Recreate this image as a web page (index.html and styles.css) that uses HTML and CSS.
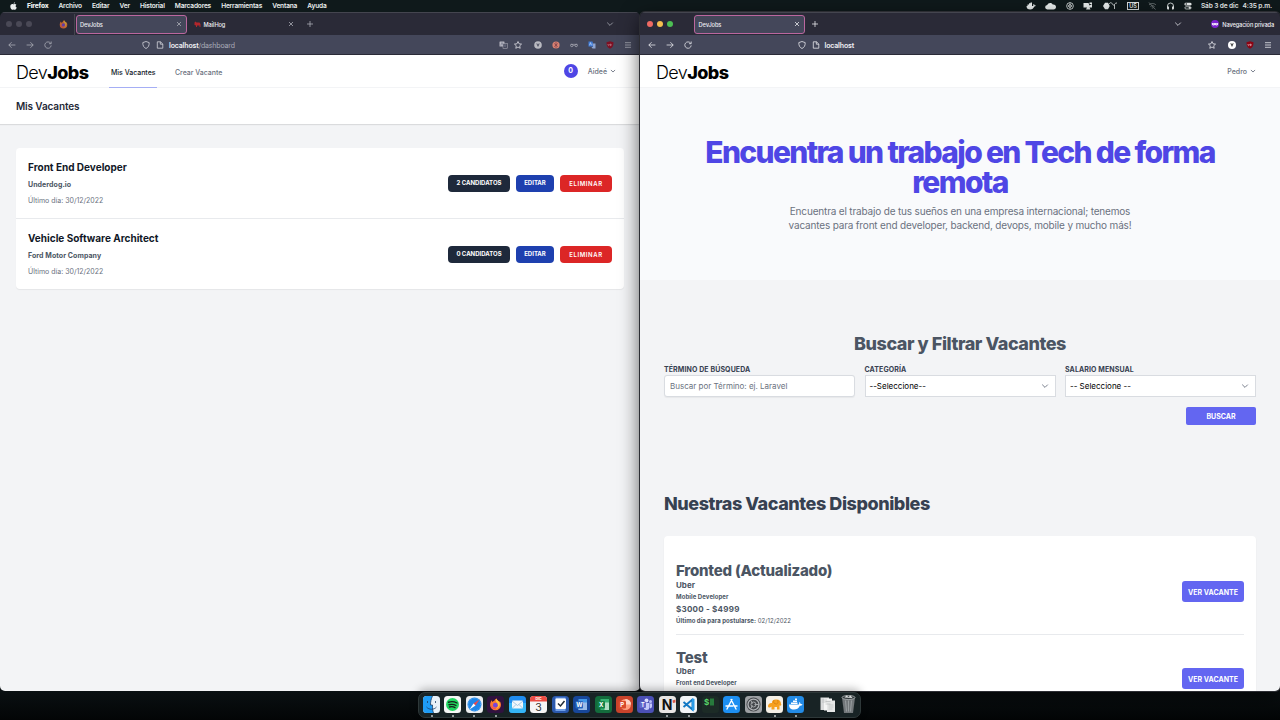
FILE: index.html
```html
<!DOCTYPE html>
<html lang="es">
<head>
<meta charset="utf-8">
<title>DevJobs</title>
<link rel="stylesheet" href="styles.css">
</head>
<body>
<svg class="sprite" aria-hidden="true">
  <symbol id="back" viewBox="0 0 8 8"><path d="M7.4 4H.8M3.6 1.2.8 4l2.8 2.8"/></symbol>
  <symbol id="fwd" viewBox="0 0 8 8"><path d="M.6 4h6.6M4.4 1.2 7.2 4 4.4 6.8"/></symbol>
  <symbol id="reload" viewBox="0 0 8 8"><path d="M6.6 2.2A3.2 3.2 0 1 0 7.2 4.4M7.2.5v2.2H5"/></symbol>
  <symbol id="shield" viewBox="0 0 8 8"><path d="M4 .5 7.2 1.6C7.2 4.6 6.4 6.400 4 7.500 1.600 6.400.8 4.600.8 1.600Z"/></symbol>
  <symbol id="doc" viewBox="0 0 8 8"><path d="M1.300.8h3.200L6.800 3v4.200H1.300ZM4.300.8V3.200h2.400"/></symbol>
  <symbol id="star" viewBox="0 0 8 8"><path d="m4 .5 1.050 2.300 2.500.3-1.850 1.700.5 2.500L4 6.050 1.800 7.300l.5-2.500L.45 3.100l2.500-.3Z"/></symbol>
  <symbol id="menu" viewBox="0 0 8 8"><path d="M1 1.700h6M1 4h6M1 6.300h6"/></symbol>
  <symbol id="down" viewBox="0 0 8 8"><path d="m1.200 2.600 2.800 2.800 2.800-2.800"/></symbol>
  <symbol id="close" viewBox="0 0 8 8"><path d="m2 2 4 4M6 2 2 6"/></symbol>
  <symbol id="plus" viewBox="0 0 8 8"><path d="M4 1v6M1 4h6"/></symbol>
  <symbol id="fox" viewBox="0 0 20 20">
    <path fill="#ff7b2e" d="M10 19a8.300 8.300 0 0 1-8.300-8.300C1.700 7.500 3 5 4.200 3.500L5 6c1-1 2-1.300 3-1.200C8.500 3 10 1.500 11.500.8c0 2 3 3 4.300 5.200l.6-1.500c1.500 2 2 4 2 6.200A8.400 8.400 0 0 1 10 19Z"/>
    <path fill="#ffc13b" d="M11.500.8c0 2 3 3 4.600 6 1.800 5-2 9.700-6.100 9.700 5-2 5-8 1-10.500-.8-2-.7-3.800.5-5.200Z"/>
    <circle cx="9.700" cy="11" r="3.700" fill="#7a45d8"/>
    <path fill="#f4436a" d="M2 9c1 5 5 7.500 10 6-4 4-10 1-10-6Z"/>
  </symbol>
</svg>

<header class="menubar">
  <svg class="apple" viewBox="0 0 14 16"><path d="M10.200.3c.1 1.700-1.300 3.200-2.900 3.200C7.100 1.900 8.600.4 10.200.3ZM12.800 5.400c-2.300 1.300-2 4.700.7 5.800-.6 1.800-2 4.300-3.500 4.300-1 0-1.300-.6-2.600-.6s-1.700.6-2.600.6C2.800 15.500.6 11.800.6 8.900c0-4.500 4.200-5.700 5.900-4.400.6.300.9.300 1.500 0 1.700-.9 3.800-.5 4.800.9Z"/></svg>
  <nav class="menus"><b>Firefox</b><span>Archivo</span><span>Editar</span><span>Ver</span><span>Historial</span><span>Marcadores</span><span>Herramientas</span><span>Ventana</span><span>Ayuda</span></nav>
  <div class="status">
    <svg width="10" height="8" viewBox="0 0 20 16"><path fill="currentColor" d="M1 8h13c1-1 1-2 .5-3l1-1c1 .7 1.500 1.500 1.500 2.500 1 0 2 0 2.500.5-.5 1.500-1.600 2-3 2-1.500 4-4 6-8 6-5 0-7.500-2-7.500-7Z"/><path fill="currentColor" d="M3 5h9v4H3zM6 2.500h6v3H6zM9 1h3v2H9z"/></svg>
    <svg width="12" height="8" viewBox="0 0 24 16"><path fill="currentColor" d="M5 15a4.500 4.500 0 0 1-.5-9C6 2 12 0 15.500 5c4-.5 6.500 1.500 6.500 5 0 3-2 5-5 5Z"/></svg>
    <svg width="8" height="8" viewBox="0 0 16 16"><circle cx="8" cy="8" r="6.700" fill="none" stroke="currentColor" stroke-width="1.600"/><circle cx="8" cy="8" r="2.700" fill="none" stroke="currentColor" stroke-width="2"/><path d="M8 1v3M8 12v3" stroke="currentColor"/></svg>
    <svg width="10" height="8" viewBox="0 0 20 16"><path fill="currentColor" d="M1 2h10l2 5 5-3v7h-5l2 4H6l2-4H1Z"/><path fill="currentColor" d="M13 1h5v3h-5z"/></svg>
    <svg width="16" height="8" viewBox="0 0 32 16"><path fill="currentColor" d="M6 1.500h6L15.500 8 12 14.500H6L2 8Z"/><path d="M14 4c3-4 5-3 7 0 1 2 2 3 3 2 2-3 3-4 6-4M25 6v8" fill="none" stroke="currentColor" stroke-width="1.600"/></svg>
    <span class="us">US</span>
    <svg class="dim" width="9" height="8" viewBox="0 0 18 16"><path d="M2 6c4-4 10-4 14 0M5 9c2-2 6-2 8 0M7.500 12h3M2 1l13 14" fill="none" stroke="currentColor" stroke-width="1.800"/></svg>
    <svg width="9" height="8" viewBox="0 0 18 16"><path d="M3 11V8a6 6 0 0 1 12 0v3" fill="none" stroke="currentColor" stroke-width="1.700"/><path d="M2 9h4v6H4q-2 0-2-2ZM12 9h4v4q0 2-2 2h-2Z" fill="currentColor"/></svg>
    <svg width="8" height="8" viewBox="0 0 16 16"><rect x="1" y="1.500" width="14" height="5.500" rx="2.700" fill="currentColor"/><circle cx="4.500" cy="4.200" r="1.500" fill="#111b1d"/><rect x="1.800" y="9.500" width="12.400" height="4.500" rx="2.200" fill="none" stroke="currentColor" stroke-width="1.500"/><circle cx="11.500" cy="11.700" r="2.300" fill="currentColor"/></svg>
    <span class="clock"><span>Sáb 3 de dic</span><span>4:35 p.m.</span></span>
  </div>
</header>

<section class="window left">
  <div class="tabs">
    <div class="lights"><i></i><i></i><i></i></div>
    <svg class="pin" viewBox="0 0 20 20"><use href="#fox"/></svg>
    <div class="tab active"><span>DevJobs</span><svg class="ic"><use href="#close"/></svg></div>
    <div class="tab hog"><svg width="7" height="7" viewBox="0 0 14 14"><path fill="#b3262c" d="M1 3 3 1l2 2h6l2 3v6h-2V9H6v3H4V9L1 8Z"/></svg><span>MailHog</span><svg class="ic"><use href="#close"/></svg></div>
    <svg class="ic new"><use href="#plus"/></svg>
    <svg class="ic list"><use href="#down"/></svg>
  </div>
  <div class="toolbar">
    <svg class="ic"><use href="#back"/></svg><svg class="ic"><use href="#fwd"/></svg><svg class="ic"><use href="#reload"/></svg>
    <div class="url"><svg class="ic"><use href="#shield"/></svg><svg class="ic"><use href="#doc"/></svg><span><b>localhost</b>/dashboard</span></div>
    <div class="tools">
      <svg class="translate" width="9" height="8" viewBox="0 0 18 16"><rect x="1" y="1" width="10" height="10" rx="1" fill="#b5b5c0"/><rect x="8" y="5" width="9" height="10" fill="#44475a" stroke="#b5b5c0"/><path d="m3.500 9 2.500-6 2.500 6M10 8h5M12.500 7c0 3-1 4-2.500 5M11 9c1 2 2 3 4 3.500" fill="none" stroke="#73758a" stroke-width="1.300"/></svg>
      <svg class="ic star"><use href="#star"/></svg>
      <svg class="ic" viewBox="0 0 8 8"><circle cx="4" cy="4" r="3.800" fill="#b9bac1" stroke="none"/><path d="M2.300 2.500h1L4 4l.7-1.500h1L4 6Z" fill="#44475a" stroke="none"/></svg>
      <svg class="ic" viewBox="0 0 8 8"><circle cx="4" cy="4" r="3.600" fill="#d98272" stroke="none"/><path d="M4 1v6M2.200 2.500 4 4l1.800-1.500M2.200 5.700 4 4l1.800 1.700" class="bug"/></svg>
      <svg class="ic" viewBox="0 0 8 8"><circle cx="1.800" cy="4.500" r="1.200"/><circle cx="6.200" cy="4.500" r="1.200"/><path d="M3 4.300q1-.6 2 0M.5 3.300h7" stroke-width=".5"/></svg>
      <svg class="ic" viewBox="0 0 8 8"><path d="M.5.5h4l1 5h-5Z" fill="#3d7bd8" stroke="none"/><path d="M4.500 2.500h3v5h-3l-1-1.500h1.500Z" fill="#8fa5cf" stroke="none"/><path d="m1.500 4.300 1-2.700 1 2.700" stroke="#dce6f8" stroke-width=".6"/></svg>
      <svg class="ic" viewBox="0 0 8 8"><path d="M4 .3 7.500 1.300C7.500 5 6.500 6.500 4 7.700 1.500 6.500.5 5 .5 1.300Z" fill="#7d1023" stroke="none"/><path d="M2 3v1.200q.6.800 1.200 0V3M4.400 3v1.700h.6q.9-.8 0-1.600Z" stroke="#c9a0a9" stroke-width=".5"/></svg>
      <svg class="ic"><use href="#menu"/></svg>
    </div>
  </div>
  <main class="page">
    <div class="topnav">
      <div class="logo">Dev<b>Jobs</b></div>
      <a class="link current">Mis Vacantes</a><a class="link crear">Crear Vacante</a>
      <span class="badge">0</span>
      <span class="user">Aideé <svg viewBox="0 0 8 8"><use href="#down"/></svg></span>
    </div>
    <div class="heading">Mis Vacantes</div>
    <div class="list-card">
      <article class="vacancy">
        <div class="info"><h3>Front End Developer</h3><p class="company">Underdog.io</p><p class="date">Último día: 30/12/2022</p></div>
        <div class="actions"><a class="btn dark">2 CANDIDATOS</a><a class="btn blue">EDITAR</a><a class="btn red">ELIMINAR</a></div>
      </article>
      <article class="vacancy">
        <div class="info"><h3>Vehicle Software Architect</h3><p class="company">Ford Motor Company</p><p class="date">Último día: 30/12/2022</p></div>
        <div class="actions"><a class="btn dark">0 CANDIDATOS</a><a class="btn blue">EDITAR</a><a class="btn red">ELIMINAR</a></div>
      </article>
    </div>
  </main>
</section>

<section class="window right">
  <div class="tabs">
    <div class="lights on"><i></i><i></i><i></i></div>
    <div class="tab active"><span>DevJobs</span><svg class="ic"><use href="#close"/></svg></div>
    <svg class="ic new"><use href="#plus"/></svg>
    <svg class="ic list"><use href="#down"/></svg>
    <div class="private"><svg viewBox="0 0 8 8"><circle cx="4" cy="4" r="3.900" fill="#7d22cf"/><path d="M.8 3.300q1.600-.8 3.200 0 1.600-.8 3.200 0 0 2.200-1.700 2.200Q4.500 5.500 4 4.600 3.500 5.500 2.500 5.500.8 5.500.8 3.300Z" fill="#fff"/><path d="M1.900 4h1M5.100 4h1" stroke="#7d22cf" stroke-width=".7"/></svg><span>Navegación privada</span></div>
  </div>
  <div class="toolbar">
    <svg class="ic"><use href="#back"/></svg><svg class="ic"><use href="#fwd"/></svg><svg class="ic"><use href="#reload"/></svg>
    <div class="url"><svg class="ic"><use href="#shield"/></svg><svg class="ic"><use href="#doc"/></svg><span><b>localhost</b></span></div>
    <div class="tools">
      <svg class="ic star"><use href="#star"/></svg>
      <svg class="ic" viewBox="0 0 8 8"><circle cx="4" cy="4" r="4" fill="#fff" stroke="none"/><path d="M2.300 2.300h1L4 3.800l.7-1.500h1L4 6Z" fill="#333" stroke="none"/></svg>
      <svg class="ic" viewBox="0 0 8 8"><path d="M4 .3 7.500 1.300C7.500 5 6.500 6.500 4 7.700 1.500 6.500.5 5 .5 1.300Z" fill="#8b0413" stroke="none"/><path d="M2 3v1.200q.6.800 1.200 0V3M4.400 3v1.700h.6q.9-.8 0-1.600Z" stroke="#eccace" stroke-width=".6"/></svg>
      <svg class="ic"><use href="#menu"/></svg>
    </div>
  </div>
  <main class="page">
    <div class="topnav">
      <div class="logo">Dev<b>Jobs</b></div>
      <span class="user">Pedro <svg viewBox="0 0 8 8"><use href="#down"/></svg></span>
    </div>
    <div class="hero">
      <h1>Encuentra un trabajo en Tech de forma<br>remota</h1>
      <p>Encuentra el trabajo de tus sueños en una empresa internacional; tenemos<br>vacantes para front end developer, backend, devops, mobile y mucho más!</p>
    </div>
    <div class="search">
      <h2>Buscar y Filtrar Vacantes</h2>
      <div class="fields">
        <div class="field"><label>TÉRMINO DE BÚSQUEDA</label><div class="control input">Buscar por Término: ej. Laravel</div></div>
        <div class="field"><label>CATEGORÍA</label><div class="control"><span>--Seleccione--</span><svg viewBox="0 0 8 8"><use href="#down"/></svg></div></div>
        <div class="field"><label>SALARIO MENSUAL</label><div class="control"><span>-- Seleccione --</span><svg viewBox="0 0 8 8"><use href="#down"/></svg></div></div>
      </div>
      <a class="submit">BUSCAR</a>
    </div>
    <h2 class="available">Nuestras Vacantes Disponibles</h2>
    <div class="jobs">
      <article class="job">
        <div><h3>Fronted (Actualizado)</h3><p class="firm">Uber</p><p class="cat">Mobile Developer</p><p class="pay">$3000 - $4999</p><p class="last"><b>Último día para postularse:</b> 02/12/2022</p></div>
        <a class="view">VER VACANTE</a>
      </article>
      <article class="job cut">
        <div><h3>Test</h3><p class="firm">Uber</p><p class="cat">Front end Developer</p></div>
        <a class="view">VER VACANTE</a>
      </article>
    </div>
  </main>
</section>

<footer class="dock">
  <div class="app run"><svg viewBox="0 0 34 34"><rect width="34" height="34" rx="7" fill="#e9f1f8"/><path d="M7 0h12c-3 6-4 12-4 18h4c0 6 0 11 2 16H7a7 7 0 0 1-7-7V7a7 7 0 0 1 7-7Z" fill="#1e9bf4"/><path d="M9 10v4M25 10v4M7 22c5 6 15 6 20 0M19 0c-3 6-4 12-4 18h4c0 6 0 11 2 16" fill="none" stroke="#17375e" stroke-width="1.500"/></svg></div>
  <div class="app run"><svg viewBox="0 0 34 34"><rect width="34" height="34" rx="7" fill="#f6f7f6"/><circle cx="17" cy="17" r="13" fill="#20d760"/><path d="M9 12.500c6-2 12-1 17 1.500M10 17.500c5-1.500 10-1 14 1.500M11 22c4-1.200 8-.7 11 1.300" fill="none" stroke="#17241b" stroke-width="2.700" stroke-linecap="round"/></svg></div>
  <div class="app run"><svg viewBox="0 0 34 34"><rect width="34" height="34" rx="7" fill="#eceef0"/><circle cx="17" cy="17" r="14" fill="#1e86e8"/><circle cx="17" cy="17" r="12.500" fill="none" stroke="#8cc8fa" stroke-dasharray="1 2" stroke-width="2"/><path d="m27 7-8 12-4-4Z" fill="#f04848"/><path d="m7 27 8-12 4 4Z" fill="#fff"/></svg></div>
  <div class="app run"><svg viewBox="0 0 34 34"><rect width="34" height="34" rx="7" fill="#30123f"/><use href="#fox" x="4" y="4" width="26" height="26"/></svg></div>
  <div class="app"><svg viewBox="0 0 34 34"><rect width="34" height="34" rx="7" fill="#1f8cf0"/><path d="M0 14h34v13a7 7 0 0 1-7 7H7a7 7 0 0 1-7-7Z" fill="#35b5f6"/><rect x="6" y="9" width="22" height="16" rx="2" fill="#f2f7fb"/><path d="m6 10 11 9 11-9M6 25l8-8M28 25l-8-8" fill="none" stroke="#8ab9dc" stroke-width="1.500"/></svg></div>
  <div class="app"><svg viewBox="0 0 34 34"><rect width="34" height="34" rx="7" fill="#f6f6f6"/><path d="M0 11V7a7 7 0 0 1 7-7h20a7 7 0 0 1 7 7v4Z" fill="#ec4c43"/><text x="17" y="8.500" class="t" font-size="7" fill="#fff">DIC</text><text x="17" y="29" class="t thin" font-size="21" fill="#333">3</text></svg></div>
  <div class="app"><svg viewBox="0 0 34 34"><rect width="34" height="34" rx="7" fill="#2b59ad"/><path d="M7 3h20v27H7Z" fill="#70a0e8"/><rect x="7" y="5" width="21" height="21" rx="2" fill="#fff"/><path d="m12 15 5 5 8-10" fill="none" stroke="#222b36" stroke-width="3"/></svg></div>
  <div class="app"><svg viewBox="0 0 34 34"><rect width="34" height="34" rx="7" fill="#17479a"/><path d="M11 6h17v22H11Z" fill="#4398e8"/><path d="M11 13h17v15H11Z" fill="#9bbce8"/><rect x="5" y="10" width="15" height="15" rx="2" fill="#2566bd"/><text x="12.500" y="22" class="t" font-size="12" fill="#fff">W</text></svg></div>
  <div class="app"><svg viewBox="0 0 34 34"><rect width="34" height="34" rx="7" fill="#136b3c"/><path d="M11 6h17v22H11Z" fill="#38b273"/><path d="M19 13h9v15h-9Z" fill="#b0dec5"/><rect x="5" y="10" width="15" height="15" rx="2" fill="#138149"/><text x="12.500" y="22" class="t" font-size="12" fill="#fff">X</text></svg></div>
  <div class="app"><svg viewBox="0 0 34 34"><rect width="34" height="34" rx="7" fill="#c8432b"/><circle cx="19" cy="17" r="11" fill="#ff9e7d"/><path d="M19 6a11 11 0 0 1 11 11H19Z" fill="#ffd6c7"/><rect x="5" y="10" width="15" height="15" rx="2" fill="#d84a2a"/><text x="12.500" y="22" class="t" font-size="12" fill="#fff">P</text></svg></div>
  <div class="app"><svg viewBox="0 0 34 34"><rect width="34" height="34" rx="7" fill="#4b50b5"/><circle cx="19" cy="9" r="4" fill="#dadcff"/><circle cx="27" cy="11" r="3" fill="#b8bcf5"/><path d="M13 14h12v9q-1 6-7 5-4-1-5-5ZM26 15h4v6q0 3-4 4Z" fill="#c5c9fa"/><rect x="5" y="11" width="13" height="13" rx="2" fill="#6066cc"/><text x="11.500" y="21.500" class="t" font-size="11" fill="#fff">T</text></svg></div>
  <div class="app run"><svg viewBox="0 0 34 34"><rect width="34" height="34" rx="7" fill="#e8e6e4"/><text x="16" y="27" class="t" font-size="28" fill="#111">N</text><path d="m27 9 6-2v6l-5 1Z" fill="#d95a4c"/></svg></div>
  <div class="app run"><svg viewBox="0 0 34 34"><rect width="34" height="34" rx="7" fill="#f2f5f7"/><path d="M25 7v20L7 12M7 22 25 7" fill="none" stroke="#1279c4" stroke-width="4"/><path d="m24 4 5 2v22l-5 2Z" fill="#2a9ce8"/></svg></div>
  <div class="app"><svg viewBox="0 0 34 34"><rect width="34" height="34" rx="7" fill="#1c2b26"/><text x="9" y="18" class="t" font-size="16" fill="#58d468">$</text><rect x="16" y="5" width="8" height="14" fill="#277a3c"/></svg></div>
  <div class="app"><svg viewBox="0 0 34 34"><rect width="34" height="34" rx="7" fill="#1d8ff2"/><path d="m16 7 9 17M18 7 9 24M6 20h14M23 20h5M26 26l-1.500-3M8 26l1.500-3" fill="none" stroke="#fff" stroke-width="2.800" stroke-linecap="round"/></svg></div>
  <div class="app"><svg viewBox="0 0 34 34"><rect width="34" height="34" rx="7" fill="#9da0a3"/><circle cx="17" cy="17" r="14" fill="#44474b"/><circle cx="17" cy="17" r="11" fill="none" stroke="#b5b8bb" stroke-width="2.500"/><circle cx="17" cy="17" r="5" fill="none" stroke="#a7aaad" stroke-width="2"/><path d="M19 17h9M15 15 11 8M15 19l-4 7" stroke="#a7aaad" stroke-width="2"/></svg></div>
  <div class="app run"><svg viewBox="0 0 34 34"><rect width="34" height="34" rx="7" fill="#f5f0e7"/><path d="M4 20c0-4 4-7 8-6-1-5 4-8 9-7 6 0 9 4 9 9 2 2 0 4-3 3v8h-5v-5h-5v5h-6v-6c-2 3-7 3-7-1Z" fill="#f6a01f"/><path d="M16 8c-2 5 0 8 5 8 3-1 4-4 2-8" fill="none" stroke="#d37b0c" stroke-width="1.500"/></svg></div>
  <div class="app run"><svg viewBox="0 0 34 34"><rect width="34" height="34" rx="7" fill="#238be6"/><path d="M4 17h20c1-2 0-3 0-5 2 1 3 2 3 4 2-.5 3 0 4 1-1 2-3 3-5 2-3 6-7 8-12 8-7 0-10-4-10-10ZM8 13h13v3H8ZM12 9h8v3h-8ZM16 5h4v3h-4Z" fill="#fff"/></svg></div>
  <i class="sep"></i>
  <div class="app"><svg viewBox="0 0 34 34"><path d="M3 3h17v25H3Z" fill="#d9dadb"/><path d="M10 5h16v24H10Z" fill="#f5f5f5"/><path d="M16 9h16v23H16Z" fill="#e6e7e7"/><path d="M6 8h10M6 12h10M13 11h10M13 16h10M19 18h10M19 22h10M19 26h8" stroke="#a7a9aa"/></svg></div>
  <div class="app trash"><svg viewBox="0 0 34 38"><path d="M4 5h26l-4 31H8Z" fill="#72777a"/><ellipse cx="17" cy="5" rx="13" ry="4" fill="#333a3d" stroke="#b9bdbf" stroke-width="1.500"/><path d="m9 5 4-4 4 3 4-3 4 5" fill="#dadddd"/><path d="m11 11 2 22M17 11v22M23 11l-2 22" stroke="#a6abad" stroke-width="1.500"/></svg></div>
</footer>
</body>
</html>
```
FILE: styles.css
```css
* { box-sizing: border-box; }
body { margin: 0; width: 1280px; height: 720px; overflow: hidden; position: relative; background: linear-gradient(#0f191b, #0a1012 96%, #030506); font-family: Inter, "Liberation Sans", sans-serif; -webkit-font-smoothing: antialiased; }
h1, h2, h3, p { margin: 0; }
svg { display: block; flex: none; }
.sprite { position: absolute; width: 0; height: 0; }

.menubar { display: flex; align-items: center; height: 12px; padding: 0 8px 0 10px; color: #e9eded; font-size: 6.600px; font-weight: 600; letter-spacing: -.19px; background: #0f191b; }
.apple { width: 7px; height: 8px; margin-right: 10px; fill: #e9eded; }
.menus { display: flex; gap: 10.100px; }
.menus b { font-weight: 800; }
.status { display: flex; align-items: center; margin-left: auto; gap: 9px; }
.dim { opacity: .45; }
.us { border: 1px solid #d8dcdc; font-size: 5.500px; line-height: 6px; padding: 0 1px; letter-spacing: 0; }
.clock { display: flex; gap: 4px; white-space: nowrap; letter-spacing: -.13px; }

.window { position: absolute; top: 12px; width: 640px; height: 679px; display: flex; flex-direction: column; border-radius: 5px; overflow: hidden; }
.left { left: 0; }
.right { left: 640px; box-shadow: 0 0 0 1px #2c2d33, 0 6px 20px rgba(0,0,0,.65); }
.tabs { height: 23px; flex: none; display: flex; align-items: center; background: #2a2a37; border-top: 1px solid #44454f; color: #eeeef2; font-size: 5.700px; font-weight: 500; }
.lights { display: flex; gap: 4px; padding-left: 6px; }
.lights i { width: 6px; height: 6px; border-radius: 50%; background: #4a4956; }
.lights.on { padding-left: 6.500px; }
.lights.on i:nth-child(1) { background: #ef6a63; }
.lights.on i:nth-child(2) { background: #f5bf4f; }
.lights.on i:nth-child(3) { background: #4cbf53; }
.pin { width: 9px; height: 9px; margin-left: 26.500px; opacity: .7; }
.tab { display: flex; align-items: center; height: 19px; width: 111px; }
.tab .ic { margin-left: auto; }
.tab.active { background: #44475a; border: 1px solid #bb679f; border-radius: 3px; padding: 0 3px 0 3.500px; letter-spacing: -.1px; }
.left .tab.active { margin-left: 8px; position: relative; }
.left .tab.active::before { content: ""; position: absolute; left: -3px; top: -2px; height: 22px; border-left: 1px solid #44454f; }
.right .tab.active { margin-left: 21.500px; }
.hog { padding: 0 0 0 7px; gap: 3px; width: 108.500px; letter-spacing: -.1px; }
.ic { width: 8px; height: 8px; fill: none; stroke: #f0f0f4; stroke-width: .75; }
.left .tabs .ic, .left .toolbar .ic { stroke: #b0b1bb; }
.bug { stroke: #783e49; stroke-width: .7; }
.new { margin-left: 10.500px; }
.right .new { margin-left: 6px; }
.list { margin-left: auto; }
.left .list { margin-right: 26px; }
.private { display: flex; align-items: center; gap: 3px; padding-right: 6px; margin-left: 29px; letter-spacing: -.14px; white-space: nowrap; }
.private svg { width: 8px; height: 8px; }
.toolbar { height: 20px; flex: none; display: flex; align-items: center; padding: 0 8px; gap: 10px; background: #44475a; border-bottom: 1px solid #2a2a37; color: #a9abb8; font-size: 7px; letter-spacing: -.16px; }
.url { display: flex; align-items: center; gap: 6px; margin-left: 80px; }
.url span { margin-left: -1px; padding-top: 1px; }
.url b { color: #f0f0f4; font-weight: 600; }
.right .url { margin-left: 95.500px; }
.tools { display: flex; align-items: center; gap: 10px; margin-left: auto; }
.translate { margin-right: -4px; }
.left .toolbar .star { margin-right: 2px; stroke: #e6e6eb; }
.right .star { margin-right: 2px; }
.left .toolbar .url .ic { stroke: #dcdce3; }

.page { flex: 1; background: #f3f4f6; color: #111827; overflow: hidden; }
.topnav { display: flex; align-items: center; height: 33px; padding: 0 24px 0 16px; background: #fff; border-bottom: 1px solid #f3f4f6; font-size: 7px; font-weight: 500; color: #6b7280; }
.logo { color: #000; font-size: 18px; width: 93px; font-weight: 300; letter-spacing: -.6px; padding-top: 2px; }
.logo b { font-weight: 800; }
.link { align-self: stretch; display: flex; align-items: center; padding-top: 2px; white-space: nowrap; letter-spacing: -.03px; }
.current { color: #111827; border-bottom: 1.500px solid #a5aef5; padding-left: 2px; padding-right: 2px; margin-bottom: -1px; }
.crear { margin-left: 17.500px; }
.badge { margin-left: auto; width: 14px; height: 14px; border-radius: 50%; background: #4f46e5; color: #fff; font-weight: 700; text-align: center; line-height: 14.500px; margin-right: 10px; }
.user { display: flex; align-items: center; gap: 3px; }
.user svg { width: 6px; height: 6px; fill: none; stroke: #6b7280; stroke-width: 1.200; }
.right .user { margin-left: auto; }
.heading { height: 36px; background: #fff; padding: 0 16px; line-height: 37px; font-size: 10px; font-weight: 600; letter-spacing: -.13px; color: #1f2937; box-shadow: 0 1px 1px rgba(0,0,0,.1); }
.list-card { margin: 24px 16px; background: #fff; border-radius: 4px; box-shadow: 0 1px 1px rgba(0,0,0,.06); }
.vacancy { display: flex; align-items: center; justify-content: space-between; height: 70px; padding: 0 12px; }
.vacancy + .vacancy { height: 71px; border-top: 1px solid #e8eaed; }
.info { display: grid; gap: 6px; }
.info h3 { font-size: 10px; line-height: 14px; font-weight: 700; }
.info p { font-size: 7px; line-height: 10px; }
.info .company { color: #4b5563; font-weight: 700; letter-spacing: .07px; }
.info .date { color: #6b7280; }
.actions { display: flex; gap: 6px; }
.btn { height: 17px; border-radius: 4px; color: #fff; font-size: 6px; line-height: 16.500px; font-weight: 700; text-align: center; }
.dark { width: 62px; background: #1e293b; }
.blue { width: 38px; background: #1e40af; }
.red { width: 52px; background: #dc2626; letter-spacing: .6px; font-weight: 600; line-height: 17.500px; }

.hero { height: 191.500px; padding-top: 49px; background: #f9fafc; text-align: center; }
.hero h1 { font-size: 30px; line-height: 30px; font-weight: 800; letter-spacing: -1.660px; color: #4f46e5; white-space: nowrap; }
.hero p { margin-top: 7px; font-size: 10px; line-height: 14px; letter-spacing: -.17px; color: #6b7280; }
.search { padding: 54.500px 24px 0; height: 206px; display: flex; flex-direction: column; }
h2 { font-size: 18px; line-height: 20px; font-weight: 800; letter-spacing: -.440px; color: #4b5563; }
.search h2 { text-align: center; }
.fields { display: grid; grid-template-columns: repeat(3, 1fr); gap: 9.500px; margin-top: 10px; }
.field label { display: block; font-size: 7px; line-height: 11px; font-weight: 700; letter-spacing: .1px; color: #374151; }
.control { display: flex; align-items: center; justify-content: space-between; height: 22px; padding: 0 6px 0 4px; border: 1px solid #d9dce1; background: #fff; font-size: 8px; color: #000; }
.input { border-radius: 3px; padding-left: 5px; color: #6b7280; box-shadow: 0 .5px 1px rgba(0,0,0,.05); }
.control svg { width: 8px; height: 8px; fill: none; stroke: #6b7280; stroke-width: .9; }
.submit { align-self: flex-end; width: 70px; height: 18px; margin-top: 9.500px; border-radius: 2px; background: #6366f1; color: #fff; font-size: 7px; line-height: 19.500px; font-weight: 700; text-align: center; }
.available { padding: 8px 24px 0; color: #374151; }
.jobs { margin: 22.500px 24px 0; padding: 12px; background: #fff; border-radius: 4px; box-shadow: 0 1px 2px rgba(0,0,0,.06); }
.job { display: flex; align-items: center; justify-content: space-between; height: 87px; padding: 13px 0 7px; border-bottom: 1px solid #e8eaed; color: #4b5563; font-size: 6px; line-height: 12px; }
.job.cut { align-items: flex-start; border: 0; height: 56px; padding-bottom: 0; }
.job h3 { font-size: 15px; line-height: 20px; height: 18px; font-weight: 800; letter-spacing: -.22px; }
.firm, .pay { font-size: 8px; font-weight: 700; }
.pay { letter-spacing: .25px; }
.cat { font-weight: 700; letter-spacing: .08px; }
.last { letter-spacing: .05px; }
.view { width: 62px; height: 21px; margin-top: -6px; border-radius: 3px; background: #6366f1; color: #fff; font-size: 7px; line-height: 23px; font-weight: 700; text-align: center; }
.cut .view { margin-top: 19.500px; }
.cut .firm { line-height: 11px; }

.dock { position: absolute; left: 418px; top: 692px; width: 443px; height: 26px; display: flex; gap: 4.450px; padding: 3px 4px 0; border-radius: 7px; background: #182325; border: .5px solid #2e3839; box-shadow: 0 -3px 9px rgba(0,0,0,.28); }
.app { position: relative; width: 17px; height: 17px; flex: none; }
.app svg { width: 17px; height: 17px; }
.app.trash svg { height: 19px; margin-top: -1px; }
.run::after { content: ""; position: absolute; left: 7.500px; top: 19px; width: 2px; height: 2px; border-radius: 50%; background: #bcc2c3; }
.sep { width: 1px; height: 20px; margin: -1px 2.500px 0 3px; background: #3d4849; }
.t { text-anchor: middle; font-family: Inter, sans-serif; font-weight: 700; letter-spacing: 0; }
.thin { font-weight: 400; }
```
